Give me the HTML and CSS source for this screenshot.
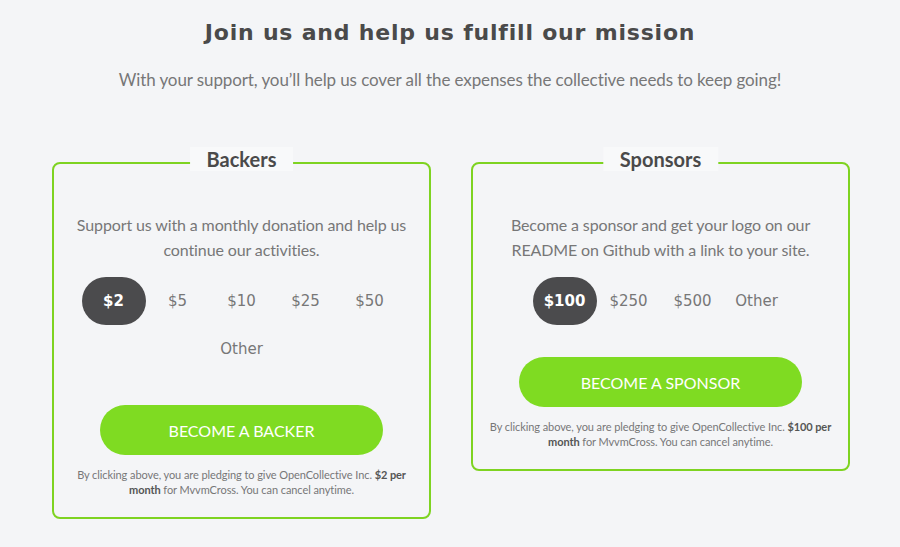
FILE: index.html
```html
<!DOCTYPE html>
<html lang="en">
<head>
    <meta charset="UTF-8">
    <meta name="viewport" content="width=device-width, initial-scale=1.0">
    <title>Join us - MvvmCross</title>
    <link rel="stylesheet" href="styles.css">
</head>
<body>

<div class="container">
    <h1>Join us and help us fulfill our mission</h1>
    <p class="lead">With your support, you’ll help us cover all the expenses the collective needs to keep going!</p>

    <div class="tiers">
        <div class="tier">
            <h2 class="tier-title">Backers</h2>
            <p class="tier-desc">Support us with a monthly donation and help us continue our activities.</p>
            <div class="amounts">
                <span class="amount selected">$2</span>
                <span class="amount">$5</span>
                <span class="amount">$10</span>
                <span class="amount">$25</span>
                <span class="amount">$50</span>
                <span class="amount">Other</span>
            </div>
            <button class="join">Become a backer</button>
            <p class="terms">By clicking above, you are pledging to give OpenCollective Inc. <strong>$2 per</strong> <strong>month</strong> for MvvmCross. You can cancel anytime.</p>
        </div>

        <div class="tier">
            <h2 class="tier-title">Sponsors</h2>
            <p class="tier-desc">Become a sponsor and get your logo on our README on Github with a link to your site.</p>
            <div class="amounts">
                <span class="amount selected">$100</span>
                <span class="amount">$250</span>
                <span class="amount">$500</span>
                <span class="amount">Other</span>
            </div>
            <button class="join">Become a sponsor</button>
            <p class="terms">By clicking above, you are pledging to give OpenCollective Inc. <strong>$100 per</strong> <strong>month</strong> for MvvmCross. You can cancel anytime.</p>
        </div>
    </div>
</div>

</body>
</html>
```

FILE: styles.css
```css
body {
    margin: 0;
    background: #f4f5f7;
    font-family: Lato, "Open Sans", sans-serif;
    color: #777;
    text-align: center;
}
.container {
    width: 800px;
    margin: 0 auto;
}
h1 {
    margin: 18px 0 0;
    font-family: "DejaVu Sans", sans-serif;
    font-size: 22px;
    line-height: 30px;
    font-weight: bold;
    letter-spacing: 0.8px;
    color: #4a4a4a;
}
.lead {
    margin: 20px 0 0;
    font-size: 17px;
    line-height: 24px;
    letter-spacing: -0.1px;
    color: #777;
}
.tiers {
    display: flex;
    align-items: flex-start;
    gap: 40px;
    margin-top: 70px;
    padding-left: 2px;
}
.tier {
    position: relative;
    width: 379px;
    box-sizing: border-box;
    border: 2px solid #7ed321;
    border-radius: 8px;
    padding: 48px 12px 20px;
}
.tier-title {
    position: absolute;
    top: -17px;
    left: 50%;
    transform: translateX(-50%);
    margin: 0;
    padding: 0 17px;
    background: #f8f9fa;
    font-size: 20px;
    line-height: 24px;
    font-weight: bold;
    color: #4a4a4a;
    white-space: nowrap;
}
.tier-desc {
    margin: 0;
    font-size: 16px;
    line-height: 25px;
    letter-spacing: -0.12px;
}
.amounts {
    display: flex;
    flex-wrap: wrap;
    justify-content: center;
    margin-top: 15px;
}
.amount {
    width: 64px;
    height: 48px;
    line-height: 48px;
    border-radius: 24px;
    font-family: "DejaVu Sans", sans-serif;
    font-size: 15px;
    color: #777;
    cursor: pointer;
}
.amount.selected {
    background: #4b4b4d;
    color: #fff;
    font-weight: bold;
}
.join {
    display: block;
    width: 283px;
    height: 50px;
    margin: 32px auto 0;
    border: none;
    border-radius: 25px;
    background: #7fdb22;
    color: #fff;
    font-family: Lato, sans-serif;
    font-size: 16px;
    text-transform: uppercase;
    cursor: pointer;
}
.terms {
    margin: 12px 0 0;
    font-size: 11px;
    line-height: 15px;
    letter-spacing: -0.08px;
    color: #777;
}
.terms strong {
    color: #555;
}
```
